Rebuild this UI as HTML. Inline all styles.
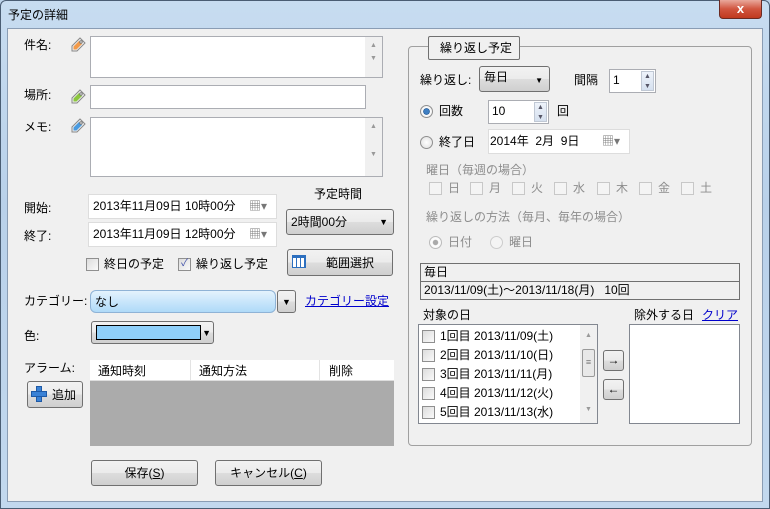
<!DOCTYPE html>
<html><head><meta charset="utf-8"><style>
*{box-sizing:border-box;margin:0;padding:0}
body{width:770px;height:509px;overflow:hidden;background:#bcd3ea;font-family:"Liberation Sans","Noto Sans CJK JP",sans-serif;font-size:12px;line-height:15px;color:#000;position:relative}
.a{position:absolute;white-space:nowrap}
.frame{position:absolute;left:0;top:0;width:770px;height:509px;background:linear-gradient(#c7dcf0,#b9d1ea 40%,#c2d8ee);border:1px solid #4a5d73;border-radius:6px 6px 0 0}
.client{position:absolute;left:7px;top:28px;width:756px;height:474px;background:#f0f0f0;border:1px solid #8a9db4}
.box{position:absolute;background:#fff;border:1px solid #abadb3}
.btn{position:absolute;border:1px solid #707070;border-radius:3px;background:linear-gradient(#f2f2f2,#ebebeb 50%,#dddddd 51%,#cfcfcf);text-align:center}
.sb{position:absolute;right:0;top:0;bottom:0;width:17px;background:#f0f0f0;color:#999;font-size:7px;text-align:center}
.cb{position:absolute;width:13px;height:13px;border:1px solid #8f8f8f;background:linear-gradient(135deg,#dcdcdc,#fafafa)}
.cbg{border-color:#c8c8c8;background:#f4f4f4}
.rd{position:absolute;width:13px;height:13px;border-radius:50%;border:1px solid #8f8f8f;background:radial-gradient(#fff,#ddd)}
.g{color:#8d8d8d}
.tag{position:absolute;width:16px;height:16px}
</style></head><body>
<div class="frame"></div>
<div class="a" style="left:8px;top:8px">予定の詳細</div>
<div class="a" style="left:719px;top:0;width:43px;height:19px;border:1px solid #6b2a22;border-top:none;border-radius:0 0 4px 4px;background:linear-gradient(#e9a99c,#d1553f 50%,#c0391f);color:#fff;font-weight:bold;text-align:center;line-height:17px;font-size:13px">x</div>
<div class="client"></div>

<!-- left -->
<div class="a" style="left:24px;top:38px">件名:</div>
<svg class="tag" style="left:70px;top:37px" viewBox="0 0 16 16"><path d="M2 14 L2 9 L10 1 L15 6 L7 14 Z" fill="#eee" stroke="#888"/><path d="M3.5 12.5 L3.5 9.5 L9 4 L12 7 L6.5 12.5 Z" fill="#f29a4a"/><circle cx="11" cy="5" r="1.2" fill="#fff" stroke="#777"/></svg>
<div class="box" style="left:90px;top:36px;width:293px;height:42px"><div class="sb" style="line-height:13px;padding-top:2px">▲<br>▼</div></div>
<div class="a" style="left:24px;top:88px">場所:</div>
<svg class="tag" style="left:70px;top:89px" viewBox="0 0 16 16"><path d="M2 14 L2 9 L10 1 L15 6 L7 14 Z" fill="#eee" stroke="#888"/><path d="M3.5 12.5 L3.5 9.5 L9 4 L12 7 L6.5 12.5 Z" fill="#8cc63f"/><circle cx="11" cy="5" r="1.2" fill="#fff" stroke="#777"/></svg>
<div class="box" style="left:90px;top:85px;width:276px;height:24px"></div>
<div class="a" style="left:24px;top:120px">メモ:</div>
<svg class="tag" style="left:70px;top:118px" viewBox="0 0 16 16"><path d="M2 14 L2 9 L10 1 L15 6 L7 14 Z" fill="#eee" stroke="#888"/><path d="M3.5 12.5 L3.5 9.5 L9 4 L12 7 L6.5 12.5 Z" fill="#4a9be0"/><circle cx="11" cy="5" r="1.2" fill="#fff" stroke="#777"/></svg>
<div class="box" style="left:90px;top:117px;width:293px;height:60px"><div class="sb" style="line-height:14px;padding-top:2px">▲<br><br>▼</div></div>

<div class="a" style="left:24px;top:201px">開始:</div>
<div class="box" style="left:88px;top:194px;width:189px;height:25px;border-color:#ddd;padding:4px 0 0 4px">2013年11月09日 10時00分<span style="position:absolute;left:160px;top:4px;color:#777">▦▾</span></div>
<div class="a" style="left:24px;top:229px">終了:</div>
<div class="box" style="left:88px;top:222px;width:189px;height:25px;border-color:#ddd;padding:4px 0 0 4px">2013年11月09日 12時00分<span style="position:absolute;left:160px;top:4px;color:#777">▦▾</span></div>
<div class="a" style="left:314px;top:187px">予定時間</div>
<div class="btn" style="left:286px;top:209px;width:108px;height:26px;text-align:left;padding:5px 0 0 4px">2時間00分<span style="position:absolute;right:5px;top:5px;font-size:9px">▼</span></div>
<div class="cb" style="left:86px;top:258px"></div><div class="a" style="left:104px;top:257px">終日の予定</div>
<div class="cb" style="left:178px;top:258px;font-size:10px;color:#3d4ea8;line-height:10px;text-align:center">✓</div><div class="a" style="left:196px;top:257px">繰り返し予定</div>
<div class="btn" style="left:287px;top:249px;width:106px;height:27px;padding-top:6px;padding-left:20px">範囲選択<div style="position:absolute;left:4px;top:5px;width:14px;height:13px;border:1px solid #2c6fbf;background:repeating-linear-gradient(90deg,#fff 0 3px,#2c6fbf 3px 4px);border-top:3px solid #2c6fbf"></div></div>

<div class="a" style="left:24px;top:294px">カテゴリー:</div>
<div class="a" style="left:90px;top:290px;width:186px;height:23px;border:1px solid #8fb3d6;border-radius:6px;background:linear-gradient(#e4f3fd,#c9e6fb 50%,#afdaf8);padding:4px 0 0 4px">なし</div>
<div class="btn" style="left:277px;top:290px;width:19px;height:23px;font-size:9px;padding-top:4px">▼</div>
<div class="a" style="left:305px;top:294px;color:#0000cc;text-decoration:underline">カテゴリー設定</div>
<div class="a" style="left:24px;top:329px">色:</div>
<div class="btn" style="left:91px;top:321px;width:123px;height:23px;text-align:right;font-size:9px;padding:4px 2px 0 0">▼<div style="position:absolute;left:4px;top:3px;width:105px;height:15px;background:#8fd0fa;border:1px solid #000"></div></div>

<div class="a" style="left:24px;top:361px">アラーム:</div>
<div class="a" style="left:90px;top:360px;width:304px;height:86px;background:#ababab">
<div style="height:21px;background:#fff;border-bottom:1px solid #ddd;position:relative">
<span class="a" style="left:8px;top:4px">通知時刻</span>
<span class="a" style="left:100px;top:0;height:20px;border-left:1px solid #e3e3e3"></span>
<span class="a" style="left:109px;top:4px">通知方法</span>
<span class="a" style="left:229px;top:0;height:20px;border-left:1px solid #e3e3e3"></span>
<span class="a" style="left:239px;top:4px">削除</span></div></div>
<div class="btn" style="left:27px;top:381px;width:56px;height:27px;padding:6px 0 0 18px">追加<div style="position:absolute;left:3px;top:4px;width:16px;height:16px"><div style="position:absolute;left:5px;top:0;width:6px;height:16px;background:#3a82d6;border:1px solid #1f5aa6"></div><div style="position:absolute;left:0;top:5px;width:16px;height:6px;background:#3a82d6;border:1px solid #1f5aa6"></div></div></div>
<div class="btn" style="left:91px;top:460px;width:107px;height:26px;padding-top:5px">保存(<u>S</u>)</div>
<div class="btn" style="left:215px;top:460px;width:107px;height:26px;padding-top:5px">キャンセル(<u>C</u>)</div>

<!-- right -->
<div class="a" style="left:408px;top:46px;width:344px;height:400px;border:1px solid #a0a0a0;border-radius:4px"></div>
<div class="a" style="left:428px;top:36px;width:92px;height:24px;border:1px solid #707070;border-radius:2px;background:#f0f0f0;padding:4px 0 0 11px">繰り返し予定</div>
<div class="a" style="left:420px;top:73px">繰り返し:</div>
<div class="btn" style="left:479px;top:66px;width:71px;height:26px;text-align:left;padding:3px 0 0 4px">毎日<span style="position:absolute;right:6px;top:6px;font-size:8px">▼</span></div>
<div class="a" style="left:574px;top:73px">間隔</div>
<div class="box" style="left:609px;top:69px;width:47px;height:24px;padding:3px 0 0 3px">1<div class="sb" style="width:13px;right:1px;top:1px;bottom:1px;background:linear-gradient(#eef3fa,#d6e1ef);border:1px solid #c0c8d4;color:#556;line-height:10px">▲<br>▼</div></div>
<div class="rd" style="left:420px;top:105px;background:radial-gradient(#3f7fc3 30%,#1b4f8a 40%,#fff 45%,#ddd)"></div>
<div class="a" style="left:439px;top:104px">回数</div>
<div class="box" style="left:488px;top:100px;width:61px;height:24px;padding:3px 0 0 3px">10<div class="sb" style="width:13px;right:1px;top:1px;bottom:1px;background:linear-gradient(#eef3fa,#d6e1ef);border:1px solid #c0c8d4;color:#556;line-height:10px">▲<br>▼</div></div>
<div class="a" style="left:557px;top:104px">回</div>
<div class="rd" style="left:420px;top:136px"></div>
<div class="a" style="left:439px;top:135px">終了日</div>
<div class="box" style="left:488px;top:129px;width:142px;height:25px;border-color:#ddd;padding:4px 0 0 1px">2014年&nbsp; 2月&nbsp; 9日<span style="position:absolute;left:113px;top:4px;color:#777">▦▾</span></div>
<div class="a g" style="left:426px;top:163px">曜日（毎週の場合）</div>
<div class="cb cbg" style="left:429px;top:182px"></div><div class="a g" style="left:448px;top:181px">日</div>
<div class="cb cbg" style="left:470px;top:182px"></div><div class="a g" style="left:489px;top:181px">月</div>
<div class="cb cbg" style="left:512px;top:182px"></div><div class="a g" style="left:531px;top:181px">火</div>
<div class="cb cbg" style="left:554px;top:182px"></div><div class="a g" style="left:573px;top:181px">水</div>
<div class="cb cbg" style="left:597px;top:182px"></div><div class="a g" style="left:616px;top:181px">木</div>
<div class="cb cbg" style="left:639px;top:182px"></div><div class="a g" style="left:658px;top:181px">金</div>
<div class="cb cbg" style="left:681px;top:182px"></div><div class="a g" style="left:700px;top:181px">土</div>
<div class="a g" style="left:426px;top:210px">繰り返しの方法（毎月、毎年の場合）</div>
<div class="rd" style="left:429px;top:236px;border-color:#bbb;background:radial-gradient(#aaa 30%,#fff 40%,#eee)"></div><div class="a g" style="left:448px;top:235px">日付</div>
<div class="rd" style="left:490px;top:236px;border-color:#ccc;background:#f4f4f4"></div><div class="a g" style="left:509px;top:235px">曜日</div>
<div class="a" style="left:420px;top:263px;width:320px;height:37px;border:1px solid #707070"><div style="height:18px;border-bottom:1px solid #707070;padding:1px 0 0 3px">毎日</div><div style="padding:1px 0 0 3px">2013/11/09(土)～2013/11/18(月)&nbsp;&nbsp; 10回</div></div>
<div class="a" style="left:423px;top:308px">対象の日</div>
<div class="box" style="left:418px;top:324px;width:180px;height:100px;border-color:#828790">
<div class="sb" style="line-height:14px;padding-top:4px">▲<div style="margin:6px 2px;height:28px;border:1px solid #999;border-radius:2px;background:#e8e8e8;color:#777;font-size:9px;line-height:24px">≡</div><div style="margin-top:26px">▼</div></div>
<div style="position:absolute;left:3px;top:2px;line-height:19px">
<div><span class="cb" style="position:relative;display:inline-block;vertical-align:-3px;margin-right:5px"></span>1回目 2013/11/09(土)</div>
<div><span class="cb" style="position:relative;display:inline-block;vertical-align:-3px;margin-right:5px"></span>2回目 2013/11/10(日)</div>
<div><span class="cb" style="position:relative;display:inline-block;vertical-align:-3px;margin-right:5px"></span>3回目 2013/11/11(月)</div>
<div><span class="cb" style="position:relative;display:inline-block;vertical-align:-3px;margin-right:5px"></span>4回目 2013/11/12(火)</div>
<div><span class="cb" style="position:relative;display:inline-block;vertical-align:-3px;margin-right:5px"></span>5回目 2013/11/13(水)</div>
</div></div>
<div class="btn" style="left:603px;top:350px;width:21px;height:21px;line-height:18px">→</div>
<div class="btn" style="left:603px;top:379px;width:21px;height:21px;line-height:18px">←</div>
<div class="a" style="left:634px;top:308px">除外する日</div>
<div class="a" style="left:702px;top:308px;color:#0000cc;text-decoration:underline">クリア</div>
<div class="box" style="left:629px;top:324px;width:111px;height:100px;border-color:#828790"></div>
</body></html>
